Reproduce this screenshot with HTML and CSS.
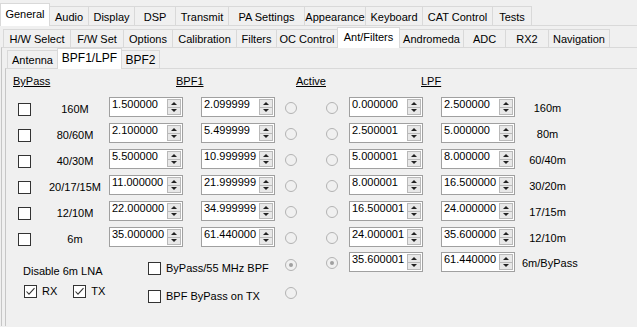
FILE: index.html
```html
<!DOCTYPE html>
<html>
<head>
<meta charset="utf-8">
<title>Setup</title>
<link rel="stylesheet" href="styles.css">
</head>
<body>
<div class="tabctl">
  <div class="strip strip-1">
    <div class="tab sel t-general">General</div>
    <div class="tab t-audio">Audio</div>
    <div class="tab t-display">Display</div>
    <div class="tab t-dsp">DSP</div>
    <div class="tab t-transmit">Transmit</div>
    <div class="tab t-pa">PA Settings</div>
    <div class="tab t-appearance">Appearance</div>
    <div class="tab t-keyboard">Keyboard</div>
    <div class="tab t-cat">CAT Control</div>
    <div class="tab t-tests">Tests</div>
  </div>
  <div class="page page-1">
    <div class="tabctl">
      <div class="strip strip-2">
        <div class="tab t-hw">H/W Select</div>
        <div class="tab t-fw">F/W Set</div>
        <div class="tab t-options">Options</div>
        <div class="tab t-calibration">Calibration</div>
        <div class="tab t-filters">Filters</div>
        <div class="tab t-oc">OC Control</div>
        <div class="tab sel t-ant">Ant/Filters</div>
        <div class="tab t-andromeda">Andromeda</div>
        <div class="tab t-adc">ADC</div>
        <div class="tab t-rx2">RX2</div>
        <div class="tab t-nav">Navigation</div>
      </div>
      <div class="page page-2">
        <div class="tabctl">
          <div class="strip strip-3">
            <div class="tab t-antenna">Antenna</div>
            <div class="tab sel t-bpf1">BPF1/LPF</div>
            <div class="tab t-bpf2">BPF2</div>
          </div>
          <div class="page page-3">
            <div class="heads">
              <span class="head h-bypass">ByPass</span>
              <span class="head h-bpf">BPF1</span>
              <span class="head h-active">Active</span>
              <span class="head h-lpf">LPF</span>
            </div>

            <div class="bands">
              <span class="chk"></span><span class="band">160M</span>
              <div class="spin"><span class="val">1.500000</span><span class="btns"><span class="up"></span><span class="dn"></span></span></div>
              <div class="spin"><span class="val">2.099999</span><span class="btns"><span class="up"></span><span class="dn"></span></span></div>
              <span class="radio"></span><span class="radio"></span>
              <div class="spin"><span class="val">0.000000</span><span class="btns"><span class="up"></span><span class="dn"></span></span></div>
              <div class="spin"><span class="val">2.500000</span><span class="btns"><span class="up"></span><span class="dn"></span></span></div>
              <span class="rlabel">160m</span>

              <span class="chk"></span><span class="band">80/60M</span>
              <div class="spin"><span class="val">2.100000</span><span class="btns"><span class="up"></span><span class="dn"></span></span></div>
              <div class="spin"><span class="val">5.499999</span><span class="btns"><span class="up"></span><span class="dn"></span></span></div>
              <span class="radio"></span><span class="radio"></span>
              <div class="spin"><span class="val">2.500001</span><span class="btns"><span class="up"></span><span class="dn"></span></span></div>
              <div class="spin"><span class="val">5.000000</span><span class="btns"><span class="up"></span><span class="dn"></span></span></div>
              <span class="rlabel">80m</span>

              <span class="chk"></span><span class="band">40/30M</span>
              <div class="spin"><span class="val">5.500000</span><span class="btns"><span class="up"></span><span class="dn"></span></span></div>
              <div class="spin"><span class="val">10.999999</span><span class="btns"><span class="up"></span><span class="dn"></span></span></div>
              <span class="radio"></span><span class="radio"></span>
              <div class="spin"><span class="val">5.000001</span><span class="btns"><span class="up"></span><span class="dn"></span></span></div>
              <div class="spin"><span class="val">8.000000</span><span class="btns"><span class="up"></span><span class="dn"></span></span></div>
              <span class="rlabel">60/40m</span>

              <span class="chk"></span><span class="band">20/17/15M</span>
              <div class="spin"><span class="val">11.000000</span><span class="btns"><span class="up"></span><span class="dn"></span></span></div>
              <div class="spin"><span class="val">21.999999</span><span class="btns"><span class="up"></span><span class="dn"></span></span></div>
              <span class="radio"></span><span class="radio"></span>
              <div class="spin"><span class="val">8.000001</span><span class="btns"><span class="up"></span><span class="dn"></span></span></div>
              <div class="spin"><span class="val">16.500000</span><span class="btns"><span class="up"></span><span class="dn"></span></span></div>
              <span class="rlabel">30/20m</span>

              <span class="chk"></span><span class="band">12/10M</span>
              <div class="spin"><span class="val">22.000000</span><span class="btns"><span class="up"></span><span class="dn"></span></span></div>
              <div class="spin"><span class="val">34.999999</span><span class="btns"><span class="up"></span><span class="dn"></span></span></div>
              <span class="radio"></span><span class="radio"></span>
              <div class="spin"><span class="val">16.500001</span><span class="btns"><span class="up"></span><span class="dn"></span></span></div>
              <div class="spin"><span class="val">24.000000</span><span class="btns"><span class="up"></span><span class="dn"></span></span></div>
              <span class="rlabel">17/15m</span>

              <span class="chk"></span><span class="band">6m</span>
              <div class="spin"><span class="val">35.000000</span><span class="btns"><span class="up"></span><span class="dn"></span></span></div>
              <div class="spin"><span class="val">61.440000</span><span class="btns"><span class="up"></span><span class="dn"></span></span></div>
              <span class="radio"></span><span class="radio"></span>
              <div class="spin"><span class="val">24.000001</span><span class="btns"><span class="up"></span><span class="dn"></span></span></div>
              <div class="spin"><span class="val">35.600000</span><span class="btns"><span class="up"></span><span class="dn"></span></span></div>
              <span class="rlabel">12/10m</span>
            </div>

            <div class="bottom">
              <div class="lna">
                <div class="lna-title">Disable 6m LNA</div>
                <div class="lna-row">
                  <span class="chk on"><svg viewBox="0 0 11 11" width="11" height="11"><polyline points="1.5,5.5 4,8.2 9.5,2.2" fill="none" stroke="#333" stroke-width="1.1"/></svg></span>
                  <span class="opt-text">RX</span>
                  <span class="chk on tx"><svg viewBox="0 0 11 11" width="11" height="11"><polyline points="1.5,5.5 4,8.2 9.5,2.2" fill="none" stroke="#333" stroke-width="1.1"/></svg></span>
                  <span class="opt-text">TX</span>
                </div>
              </div>
              <div class="mid">
                <div class="opt opt-1"><span class="chk"></span><span class="opt-text">ByPass/55 MHz BPF</span></div>
                <div class="opt opt-2"><span class="chk"></span><span class="opt-text">BPF ByPass on TX</span></div>
              </div>
              <div class="rcol">
                <span class="radio on r-1"></span>
                <span class="radio r-2"></span>
              </div>
              <div class="rcol2">
                <span class="radio on"></span>
              </div>
              <div class="spin-cell">
                <div class="spin"><span class="val">35.600001</span><span class="btns"><span class="up"></span><span class="dn"></span></span></div>
              </div>
              <div class="spin"><span class="val">61.440000</span><span class="btns"><span class="up"></span><span class="dn"></span></span></div>
              <span class="blabel">6m/ByPass</span>
            </div>
          </div>
        </div>
      </div>
    </div>
  </div>
</div>
</body>
</html>
```

FILE: styles.css
```css
* { box-sizing: border-box; }
html, body { margin: 0; padding: 0; }
body {
  background: #f0f0f0;
  font-family: "Liberation Sans", Arial, sans-serif;
  font-size: 11px;
  color: #000;
  width: 637px;
  height: 327px;
  overflow: hidden;
}

/* ---------- tab controls ---------- */
.tabctl { display: flex; flex-direction: column; }
.strip { display: flex; align-items: flex-end; }
.strip-1 { height: 25px; }
.strip-2 { height: 20px; padding-left: 2px; }
.strip-3 { height: 20px; padding-left: 2px; }

.tab {
  flex: none;
  display: flex;
  align-items: center;
  justify-content: center;
  height: 18px;
  padding-top: 1px;
  border: 1px solid #d9d9d9;
  border-bottom: none;
  margin-right: -1px;
  background: #f0f0f0;
  white-space: nowrap;
}
.strip-1 .tab { height: 19px; }
.tab.sel {
  background: #fff;
  position: relative;
  z-index: 1;
  margin-bottom: -1px;
  padding-top: 0;
  padding-bottom: 2px;
}
.strip-1 .tab.sel { height: 23px; }
.strip-2 .tab.sel, .strip-3 .tab.sel { height: 21px; }

.t-general { width: 50px; }
.t-audio { width: 40px; }
.t-display { width: 47px; }
.t-dsp { width: 42px; }
.t-transmit { width: 54px; }
.t-pa { width: 77px; }
.t-appearance { width: 62px; }
.t-keyboard { width: 58px; }
.t-cat { width: 71px; }
.t-tests { width: 40px; }

.t-hw { width: 68px; }
.t-fw { width: 54px; }
.t-options { width: 50px; }
.t-calibration { width: 65px; }
.t-filters { width: 41px; }
.t-oc { width: 62px; }
.t-ant { width: 63px; }
.t-andromeda { width: 65px; }
.t-adc { width: 43px; }
.t-rx2 { width: 44px; }
.t-nav { width: 62px; }

.t-antenna { width: 51px; }
.t-bpf1 { width: 65px; font-size: 12px; }
.t-bpf2 { width: 39px; font-size: 12px; }

.page {
  border-top: 1px solid #d9d9d9;
}
.page-1 { padding: 1px 0 0 1px; }
.page-2 { padding: 0 0 0 3px; border-left: 1px solid #c6c6c6; }
.page-3 { height: 258px; border-left: 1px solid #c6c6c6; }

/* ---------- content ---------- */
.heads {
  display: flex;
  margin: 6px 0 0 7px;
  line-height: 13px;
}
.head { flex: none; text-decoration: underline; }
.h-bypass { width: 163px; }
.h-bpf { width: 120px; }
.h-active { width: 125px; }

.bands {
  display: grid;
  grid-template-columns: 13px 78px 92px 84px 41px 23px 92px 74px 65px;
  grid-auto-rows: 26px;
  margin: 9px 0 0 12px;
  align-items: start;
}

.chk {
  display: block;
  width: 13px;
  height: 13px;
  border: 1px solid #333;
  background: #fff;
  flex: none;
}
.chk svg { display: block; }
.bands .chk { margin-top: 6px; }

.band {
  padding-left: 10px;
  text-align: center;
  line-height: 14px;
  margin-top: 5px;
  white-space: nowrap;
}
.rlabel {
  text-align: center;
  line-height: 14px;
  margin-top: 4px;
  white-space: nowrap;
}

.radio {
  display: flex;
  align-items: center;
  justify-content: center;
  width: 12px;
  height: 12px;
  border: 1px solid #b3b3b3;
  border-radius: 50%;
  background: #f0f0f0;
  flex: none;
}
.bands .radio { margin-top: 5px; }
.radio.on::before {
  content: "";
  width: 4px;
  height: 4px;
  border-radius: 50%;
  background: #a0a0a0;
}

/* numeric up/down */
.spin {
  display: flex;
  width: 74px;
  height: 20px;
  border: 1px solid #a0a0a0;
  background: #fff;
  flex: none;
}
.val {
  flex: 1;
  padding-left: 2px;
  line-height: 12px;
  white-space: nowrap;
}
.btns {
  display: flex;
  flex-direction: column;
  width: 14px;
  margin: 1px 1px 1px 0;
  border: 1px solid #b9b9b9;
  background: #e8e8e8;
}
.up, .dn {
  flex: 1;
  display: flex;
  align-items: center;
  justify-content: center;
}
.dn { border-top: 1px solid #b9b9b9; }
.up::before {
  content: "";
  border-left: 3px solid transparent;
  border-right: 3px solid transparent;
  border-bottom: 3px solid #222;
}
.dn::before {
  content: "";
  border-left: 3px solid transparent;
  border-right: 3px solid transparent;
  border-top: 3px solid #222;
}

/* bottom section */
.bottom {
  display: flex;
  align-items: flex-start;
  margin-top: -1px;
  margin-left: 17px;
}
.lna { width: 125px; flex: none; }
.lna-title { margin-top: 12px; line-height: 14px; white-space: nowrap; }
.lna-row {
  display: flex;
  align-items: center;
  margin-top: 6px;
  padding-left: 1px;
}
.opt-text { margin-left: 5px; white-space: nowrap; line-height: 14px; }
.chk.tx { margin-left: 16px; }

.mid { width: 137px; flex: none; }
.opt { display: flex; align-items: center; }
.opt-1 { margin-top: 9px; }
.opt-2 { margin-top: 14px; }

.rcol { width: 41px; flex: none; }
.r-1 { margin-top: 7px; }
.r-2 { margin-top: 16px; }
.rcol2 { width: 23px; flex: none; padding-top: 5px; }
.spin-cell { width: 92px; flex: none; }
.blabel { padding-left: 7px; margin-top: 4px; line-height: 14px; white-space: nowrap; }
```
